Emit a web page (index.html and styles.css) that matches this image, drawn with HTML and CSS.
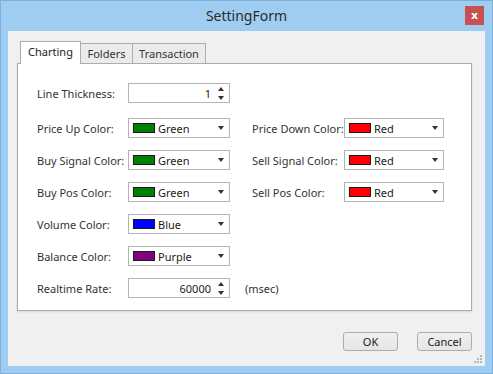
FILE: index.html
```html
<!DOCTYPE html>
<html lang="en">
<head>
  <meta charset="UTF-8">
  <title>SettingForm</title>
  <link rel="stylesheet" href="styles.css">
</head>
<body>
  <div class="window">
    <div class="titlebar">
      <span></span>
      <div class="title">SettingForm</div>
      <button class="close-btn">x</button>
    </div>
    <div class="client">
      <div class="tabs">
        <div class="tab active">Charting</div>
        <div class="tab tab-folders">Folders</div>
        <div class="tab tab-transaction">Transaction</div>
      </div>
      <div class="panel">
        <div class="row">
          <label class="label">Line Thickness:</label>
          <div class="spin">
            <span class="spin-value">1</span>
            <span class="spin-arrows"><i class="up"></i><i class="down"></i></span>
          </div>
        </div>
        <div class="row row-first">
          <label class="label">Price Up Color:</label>
          <div class="combo"><span class="swatch green"></span>Green<i class="arrow"></i></div>
          <label class="label label-right">Price Down Color:</label>
          <div class="combo combo-right"><span class="swatch red"></span>Red<i class="arrow"></i></div>
        </div>
        <div class="row">
          <label class="label">Buy Signal Color:</label>
          <div class="combo"><span class="swatch green"></span>Green<i class="arrow"></i></div>
          <label class="label label-right">Sell Signal Color:</label>
          <div class="combo combo-right"><span class="swatch red"></span>Red<i class="arrow"></i></div>
        </div>
        <div class="row">
          <label class="label">Buy Pos Color:</label>
          <div class="combo"><span class="swatch green"></span>Green<i class="arrow"></i></div>
          <label class="label label-right">Sell Pos Color:</label>
          <div class="combo combo-right"><span class="swatch red"></span>Red<i class="arrow"></i></div>
        </div>
        <div class="row">
          <label class="label">Volume Color:</label>
          <div class="combo"><span class="swatch blue"></span>Blue<i class="arrow"></i></div>
        </div>
        <div class="row">
          <label class="label">Balance Color:</label>
          <div class="combo"><span class="swatch purple"></span>Purple<i class="arrow"></i></div>
        </div>
        <div class="row">
          <label class="label">Realtime Rate:</label>
          <div class="spin">
            <span class="spin-value">60000</span>
            <span class="spin-arrows"><i class="up"></i><i class="down"></i></span>
          </div>
          <span class="unit">(msec)</span>
        </div>
      </div>
      <div class="footer">
        <button class="btn">OK</button>
        <button class="btn">Cancel</button>
      </div>
      <svg class="grip" width="8" height="8" viewBox="0 0 8 8">
        <rect x="6" y="0" width="2" height="2" fill="#b8b8b8"/>
        <rect x="3" y="3" width="2" height="2" fill="#b8b8b8"/>
        <rect x="6" y="3" width="2" height="2" fill="#b8b8b8"/>
        <rect x="0" y="6" width="2" height="2" fill="#b8b8b8"/>
        <rect x="3" y="6" width="2" height="2" fill="#b8b8b8"/>
        <rect x="6" y="6" width="2" height="2" fill="#b8b8b8"/>
      </svg>
    </div>
  </div>
</body>
</html>
```

FILE: styles.css
```css
body {
  margin: 0;
  font-family: "Noto Sans", "Open Sans", sans-serif;
  font-size: 11px;
  color: #222;
}

.window {
  width: 493px;
  height: 374px;
  box-sizing: border-box;
  border: 1px solid #7eaedc;
  background: #9fcdf2;
  display: flex;
  flex-direction: column;
}

.titlebar {
  height: 30px;
  display: grid;
  grid-template-columns: 1fr auto 1fr;
  align-items: center;
}

.title {
  font-size: 14px;
  color: #2b2b2b;
  margin-top: -1px;
}

.close-btn {
  justify-self: end;
  align-self: start;
  margin: 5px 8px 0 0;
  width: 19px;
  height: 19px;
  padding: 0;
  border: none;
  background: #c75050;
  color: #fff;
  font-family: "DejaVu Sans", sans-serif;
  font-weight: bold;
  font-size: 11px;
  line-height: 17px;
}

.client {
  position: relative;
  flex: 1;
  margin: 0 7px 7px 7px;
  background: #f0f0f0;
  padding: 10px 13px 0 9px;
}

.tabs {
  display: flex;
  align-items: flex-end;
  height: 22px;
  margin-left: 3px;
}

.tab {
  box-sizing: border-box;
  height: 20px;
  border: 1px solid #acacac;
  border-bottom: none;
  background: #ebebeb;
  text-align: center;
  line-height: 19px;
  color: #333;
  margin-left: -1px;
}

.tab.active {
  width: 61px;
  height: 23px;
  margin-left: 0;
  margin-bottom: -1px;
  background: #fff;
  position: relative;
  z-index: 1;
  line-height: 20px;
  color: #1a1a1a;
}

.tab-folders {
  width: 53px;
}

.tab-transaction {
  width: 74px;
}

.panel {
  box-sizing: border-box;
  width: 455px;
  height: 248px;
  background: #fff;
  border: 1px solid #acacac;
  box-shadow: 0 1px 2px rgba(0, 0, 0, 0.12);
  padding: 19px 0 0 19px;
}

.row {
  display: flex;
  align-items: center;
  height: 20px;
  margin-top: 12px;
}

.row:first-child {
  margin-top: 0;
}

.row-first {
  margin-top: 15px;
}

.label {
  width: 91px;
  white-space: nowrap;
  color: #333;
}

.label-right {
  width: 92px;
  margin-left: 22px;
}

.combo,
.spin {
  box-sizing: border-box;
  width: 102px;
  height: 20px;
  border: 1px solid #b4b4b4;
  background: #fff;
  display: flex;
  align-items: center;
  position: relative;
  color: #1a1a1a;
}

.combo-right {
  width: 100px;
}

.swatch {
  box-sizing: border-box;
  width: 22px;
  height: 10px;
  margin: 0 3px 0 4px;
  border: 1px solid #1a1a1a;
}

.green { background: #008000; }
.red { background: #ff0000; }
.blue { background: #0000ff; }
.purple { background: #800080; }

.arrow {
  margin-left: auto;
  margin-right: 5px;
  width: 0;
  height: 0;
  border-left: 3.5px solid transparent;
  border-right: 3.5px solid transparent;
  border-top: 4px solid #333;
}

.spin-value {
  flex: 1;
  text-align: right;
  padding-right: 7px;
}

.spin-arrows {
  display: flex;
  flex-direction: column;
  gap: 5px;
  margin-right: 5px;
}

.spin-arrows .up {
  width: 0;
  height: 0;
  border-left: 3.5px solid transparent;
  border-right: 3.5px solid transparent;
  border-bottom: 4px solid #333;
}

.spin-arrows .down {
  width: 0;
  height: 0;
  border-left: 3.5px solid transparent;
  border-right: 3.5px solid transparent;
  border-top: 4px solid #333;
}

.unit {
  margin-left: 15px;
  color: #333;
}

.footer {
  display: flex;
  justify-content: flex-end;
  gap: 19px;
  margin-top: 21px;
}

.btn {
  box-sizing: border-box;
  width: 55px;
  height: 19px;
  padding: 0;
  border: 1px solid #acacac;
  border-radius: 3px;
  background: linear-gradient(#f0f0f0, #e5e5e5);
  font-family: "Noto Sans", "Open Sans", sans-serif;
  font-size: 11px;
  color: #1a1a1a;
}

.grip {
  position: absolute;
  right: 3px;
  bottom: 3px;
}
```
